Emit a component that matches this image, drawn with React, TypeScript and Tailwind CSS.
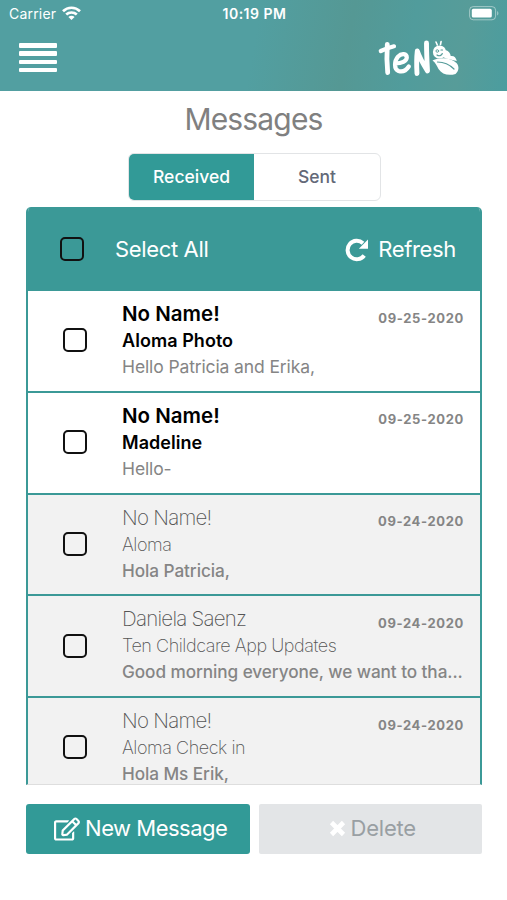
import { useState } from "react";

import { FaRegEdit } from "react-icons/fa";

interface IMessage {
  id: number;
  sender: string;
  subject: string;
  preview: string;
  date: string;
  unread: boolean;
}

const messages: IMessage[] = [
  { id: 1, sender: "No Name!", subject: "Aloma Photo", preview: "Hello Patricia and Erika,", date: "09-25-2020", unread: true },
  { id: 2, sender: "No Name!", subject: "Madeline", preview: "Hello-", date: "09-25-2020", unread: true },
  { id: 3, sender: "No Name!", subject: "Aloma", preview: "Hola Patricia,", date: "09-24-2020", unread: false },
  { id: 4, sender: "Daniela Saenz", subject: "Ten Childcare App Updates", preview: "Good morning everyone, we want to tha...", date: "09-24-2020", unread: false },
  { id: 5, sender: "No Name!", subject: "Aloma Check in", preview: "Hola Ms Erik,", date: "09-24-2020", unread: false },
];

const WifiIcon = () => (
  <svg width="19" height="15" viewBox="0 0 19 15" fill="none" stroke="#fff" strokeWidth="2.7">
    <path d="M1 5.2C5.8.6 13.2.6 18 5.2" />
    <path d="M4.2 8.6c3-2.8 7.6-2.8 10.6 0" />
    <path d="M9.5 14 6.4 10.9c1.8-1.6 4.4-1.6 6.2 0z" fill="#fff" stroke="none" />
  </svg>
);

const BatteryIcon = () => (
  <svg width="31" height="15" viewBox="0 0 31 15">
    <rect x=".6" y=".6" width="26" height="13.2" rx="3.6" fill="none" stroke="#fff" strokeOpacity=".45" />
    <rect x="2.8" y="2.8" width="20" height="8.8" rx="1.6" fill="#fff" />
    <path d="M28.2 5v4.6c1.6-.7 1.6-3.9 0-4.6z" fill="#fff" fillOpacity=".5" />
  </svg>
);

const Logo = () => (
  <svg width="84" height="42" viewBox="0 0 84 42" fill="none" stroke="#fff" strokeLinecap="round" strokeLinejoin="round">
    <path d="M3.800 14C8 12 12 10.500 17 9.300" strokeWidth="4.200" />
    <path d="M10.300 7.500c-.6 9-.5 19 .4 28" strokeWidth="4.800" />
    <path d="M18.500 26.500c6-.2 11.200-2.300 11.300-6 0-4-5.200-4.800-8.800-.8-3.700 4.300-4.400 12.300.6 14.300 3.900 1.300 7.600-.6 10.200-4.500" strokeWidth="4.200" />
    <path d="M40 36.500c-.5-8-.5-15.500.3-22.500 2.500 7.500 6.500 14 10.200 20-.5-9-1-19-1-28" strokeWidth="4.900" />
    <path d="M68.500 13c3.500 1 5 3.500 5.200 6 3.300-.5 5.300 1.500 6.100 5l-10.800-2.500-4-2z" fill="#fff" stroke="none" />
    <circle cx="62.500" cy="15" r="6.600" fill="#fff" stroke="none" />
    <path d="M60.300 8 59 5M63.500 7.500l.6-3" strokeWidth="1.600" />
    <circle cx="60.300" cy="14" r="1.300" stroke="#569c9a" strokeWidth=".9" />
    <path d="M64 13h1.500M60 18c2 1.500 4.700.6 5.300-1.500" stroke="#569c9a" strokeWidth="1.200" />
    <path d="M55.500 23.500c7-3.500 18.500-3.500 24 2.500 3 3.500 2.500 8-1 11-7 2-13.500.5-17-5-1.500-3-3-6.500-6-8.500z" fill="#fff" stroke="none" />
    <path d="M60.500 25c7 0 12 2.500 16.500 7" stroke="#569c9a" strokeWidth="1.200" />
  </svg>
);

const RefreshIcon = () => (
  <svg width="24" height="24" viewBox="0 0 24 24">
    <path d="M19.200 17.500A9.200 9.200 0 1 1 18 5.200" fill="none" stroke="#fff" strokeWidth="4" />
    <path d="M23 1.500v9.200h-9.200z" fill="#fff" />
  </svg>
);

const CloseIcon = () => (
  <svg width="17" height="17" viewBox="0 0 17 17">
    <path d="m2.500 2.500 12 12m0-12-12 12" stroke="#fff" strokeWidth="4.600" />
  </svg>
);

const Checkbox = ({ checked, onClick }: { checked: boolean; onClick: () => void }) => (
  <button
    onClick={onClick}
    className={`size-[24px] shrink-0 rounded-[5px] border-2 border-[#111] ${checked ? "bg-black/40" : ""}`}
  />
);

export default function App() {
  const [tab, setTab] = useState("received");
  const [selected, setSelected] = useState<number[]>([]);

  const toggle = (id: number) => {
    setSelected(selected.includes(id) ? selected.filter((item) => item !== id) : [...selected, id]);
  }

  const toggleAll = () => {
    setSelected(selected.length === messages.length ? [] : messages.map(({ id }) => id));
  }

  return (
    <div className="flex h-[900px] w-[507px] flex-col overflow-hidden bg-white font-['Inter',sans-serif]">
      <header className="h-[91px] shrink-0 bg-[#529fa1] bg-[linear-gradient(100deg,transparent_50%,#559894_68%,#519c9c_80%,#579c99_90%,#4b9d9f_100%)] text-white">
        <div className="grid h-[27px] grid-cols-3 items-center pl-[9px] pr-[7px] text-[14px] leading-[27px]">
          <div className="flex items-center gap-[6px]">
            <span className="tracking-[0.2px]">Carrier</span>
            <WifiIcon />
          </div>
          <span className="text-center font-semibold tracking-[0.5px]">10:19 PM</span>
          <div className="flex justify-end">
            <BatteryIcon />
          </div>
        </div>
        <div className="flex items-start justify-between pl-[19px] pr-[46px]">
          <button className="mt-4 flex flex-col gap-[3.7px]">
            <span className="h-[4.6px] w-[38px] rounded-[1px] bg-white" />
            <span className="h-[4.6px] w-[38px] rounded-[1px] bg-white" />
            <span className="h-[4.6px] w-[38px] rounded-[1px] bg-white" />
            <span className="h-[4.6px] w-[38px] rounded-[1px] bg-white" />
          </button>
          <div className="mt-[10px]">
            <Logo />
          </div>
        </div>
      </header>

      <h1 className="mt-[8px] text-center text-[30px] leading-10 tracking-[-0.85px] text-[#808080]">Messages</h1>

      <div className="ml-[128px] mt-[14px] flex h-12 w-[253px] shrink-0 overflow-hidden rounded-md border border-[#e2e4e6] text-[17.5px] font-medium">
        <button
          onClick={() => setTab("received")}
          className={`w-[125px] ${tab === "received" ? "bg-[#329a97] text-white" : "text-[#636978]"}`}
        >
          Received
        </button>
        <button
          onClick={() => setTab("sent")}
          className={`flex-1 ${tab === "sent" ? "bg-[#329a97] text-white" : "text-[#636978]"}`}
        >
          Sent
        </button>
      </div>

      <section className="ml-[26px] mr-[25px] mt-[6px] h-[578px] shrink-0 overflow-hidden rounded-t-[5px] border-x-[2px] border-b border-x-[#3b9997] border-b-[#dedede]">
        <div className="flex h-[84px] items-center bg-[#3b9997] pl-8 pr-6 text-[22px] tracking-[-0.35px] text-white">
          <Checkbox checked={selected.length === messages.length} onClick={toggleAll} />
          <span className="ml-[31px] pt-px">Select All</span>
          <button className="ml-auto flex items-center gap-[9px] pt-px">
            <RefreshIcon />
            Refresh
          </button>
        </div>
        {messages.map(({ id, sender, subject, preview, date, unread }) => (
          <div
            key={id}
            className={`flex h-[101.8px] border-b-[2.5px] border-[#3b9997] pl-[35px] pr-4 ${unread ? "bg-white" : "bg-[#f2f2f2]"}`}
          >
            <div className="flex items-center pb-[1.5px]">
              <Checkbox checked={selected.includes(id)} onClick={() => toggle(id)} />
            </div>
            <div className="ml-[35px] min-w-0 flex-1 pt-[8px]">
              <div className="flex items-center justify-between">
                <span className={`text-[20.5px] leading-[29px] ${unread ? "font-semibold text-black" : "font-extralight tracking-[-0.75px] text-[#555]"}`}>
                  {sender}
                </span>
                <span className="mt-[8px] text-[13px] font-bold leading-4 tracking-[0.65px] text-[#858585]">{date}</span>
              </div>
              <p className={`text-[18px] leading-[26px] ${unread ? "font-semibold tracking-[0.05px] text-black" : "font-extralight tracking-[-0.45px] text-[#555]"}`}>
                {subject}
              </p>
              <p className={`whitespace-nowrap leading-[26px] text-[#858585] ${unread ? "text-[17.5px] tracking-[-0.12px]" : "text-[17.2px] font-medium tracking-[-0.07px]"}`}>
                {preview}
              </p>
            </div>
          </div>
        ))}
      </section>

      <footer className="ml-[26px] mr-[25px] mt-[18.5px] grid h-[50px] grid-cols-2 gap-[9px] text-[22px]">
        <button className="flex items-center justify-center gap-[5px] rounded-[3px] bg-[#329a97] pl-[6px] tracking-[-0.5px] text-white">
          <FaRegEdit className="size-[26px]" />
          <span>New Message</span>
        </button>
        <button className="flex items-center justify-center gap-[5px] rounded-[2px] bg-[#e3e5e7] pl-1 tracking-[-0.2px] text-[#999fa3]">
          <CloseIcon />
          <span>Delete</span>
        </button>
      </footer>
    </div>
  );
}
